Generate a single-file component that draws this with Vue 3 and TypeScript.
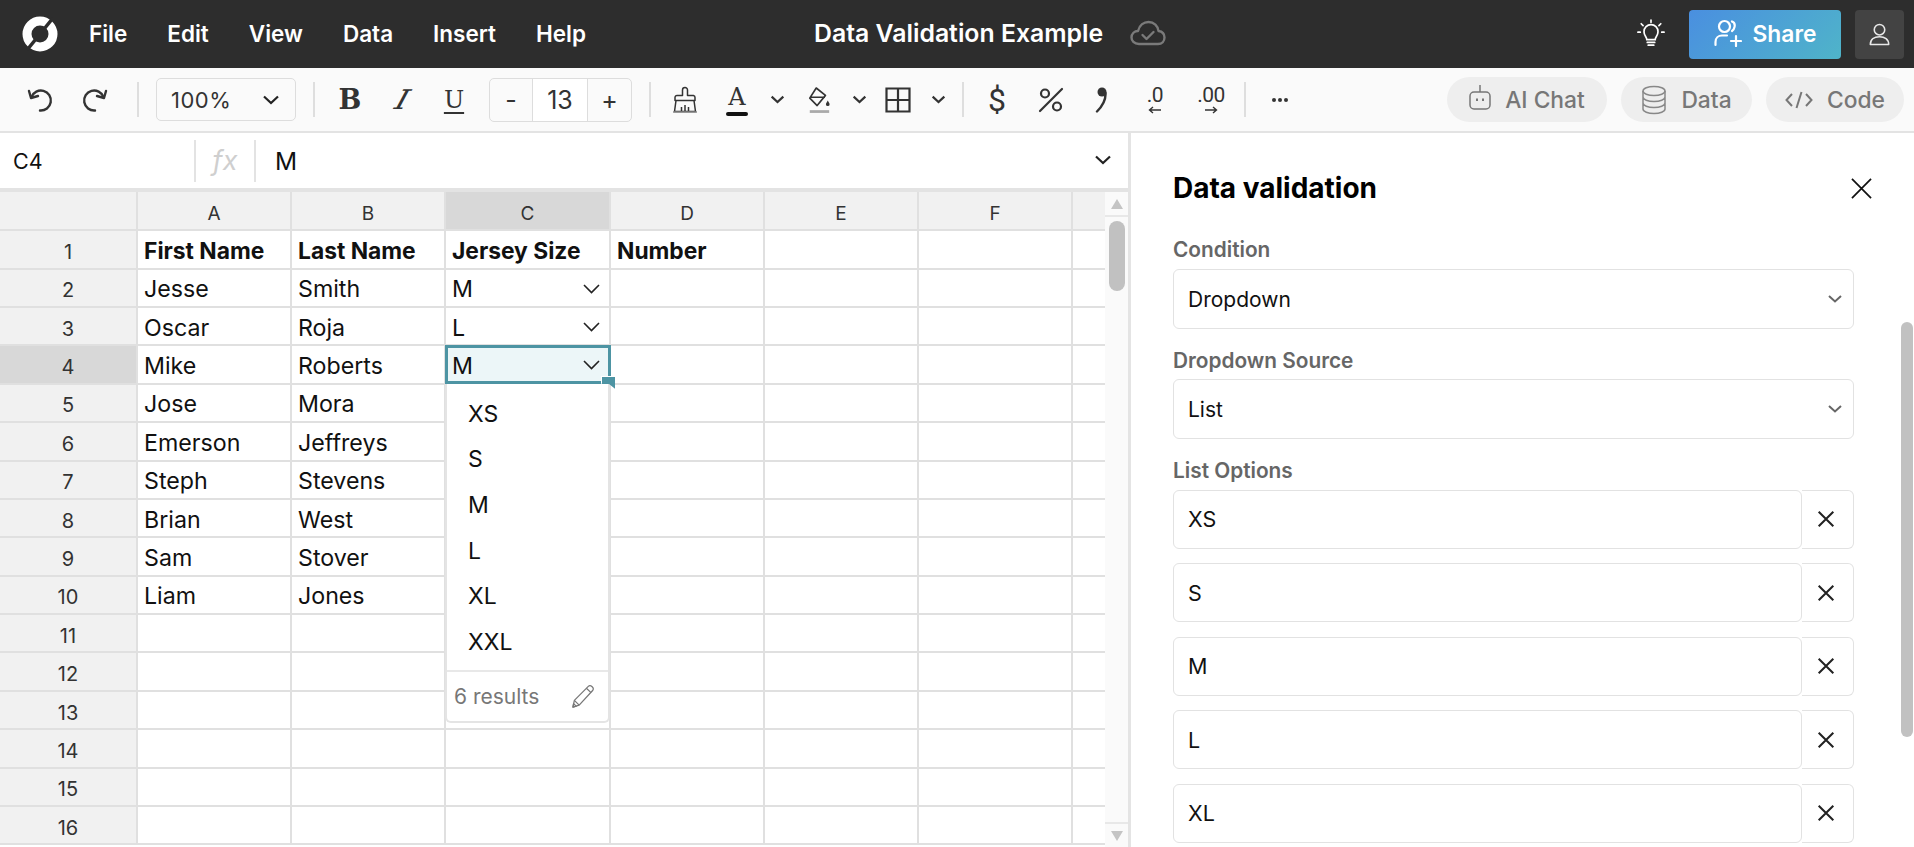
<template>
  <div class="app">
    <header class="topbar">
      <svg class="logo" viewBox="0 0 36 36">
        <circle cx="18" cy="18" r="13" fill="none" stroke="#fff" stroke-width="9" />
        <path d="M31 2 L5 34" stroke="#2d2d2d" stroke-width="3.5" />
      </svg>
      <nav class="menu">
        <span v-for="m in menus" :key="m">{{ m }}</span>
      </nav>
      <div class="doc-title">Data Validation Example</div>
      <svg class="cloud" viewBox="0 0 36 26" fill="none" stroke="#7a7a7a" stroke-width="2.4" stroke-linecap="round" stroke-linejoin="round">
        <path d="M9 24 C4 24 1.5 20.500 1.500 17.500 C1.500 13.500 4.500 11 8 11 C9.500 5 14 2 18.500 2 C24 2 28 6 28.500 11 C32 11.500 34.500 14 34.500 17.500 C34.500 21 32 24 28 24 Z" />
        <path d="M12.500 15 L16.500 19 L23.500 12" />
      </svg>
      <div class="top-right">
        <svg class="bulb" viewBox="0 0 30 32" fill="none" stroke="#fff" stroke-width="1.800" stroke-linecap="round">
          <path d="M10.500 22 C10.500 19 7.500 18 7.500 13.500 A7.500 7.500 0 0 1 22.500 13.500 C22.500 18 19.500 19 19.500 22 Z" />
          <path d="M11 25 H19 M12 28 H18 M15 1 V3.500 M4.500 5 L6.500 7 M25.500 5 L23.500 7 M1 14 H3.500 M26.500 14 H29" />
        </svg>
        <button class="share">
          <svg viewBox="0 0 28 28" fill="none" stroke="#fff" stroke-width="2.200" stroke-linecap="round">
            <circle cx="10.500" cy="7.500" r="5.500" />
            <path d="M1.500 26 V23 C1.500 19 4.500 16.500 8 16.500 H13 M18 2.500 C20.500 3.500 21 6 20.500 8 C20.200 9.500 19.500 11 18 12 M17 22 H27 M22 17 V27" />
          </svg>
          Share
        </button>
        <button class="avatar">
          <svg viewBox="0 0 24 26" fill="none" stroke="#e8e8e8" stroke-width="1.800">
            <circle cx="12" cy="7.500" r="6" />
            <path d="M1.500 24.500 C1.500 18.500 6 15.500 12 15.500 C18 15.500 22.500 18.500 22.500 24.500 Z" stroke-linejoin="round" />
          </svg>
        </button>
      </div>
    </header>

    <div class="toolbar">
      <button class="tb undo">
        <svg viewBox="0 0 28 28" fill="none" stroke="#333" stroke-width="2.400" stroke-linecap="round" stroke-linejoin="round">
          <path d="M5.500 11 A10 10 0 1 1 14 24.500" /><path d="M3 5 L5 12 L12 10" />
        </svg>
      </button>
      <button class="tb redo">
        <svg viewBox="0 0 28 28" fill="none" stroke="#333" stroke-width="2.400" stroke-linecap="round" stroke-linejoin="round">
          <path d="M22.500 11 A10 10 0 1 0 14 24.500" /><path d="M25 5 L23 12 L16 10" />
        </svg>
      </button>
      <i class="sep s1" />
      <div class="zoom-box">
        <span>100%</span>
        <svg class="chev-b" viewBox="0 0 18 10"><path d="M2 1.500 L9 8 L16 1.500" /></svg>
      </div>
      <i class="sep s2" />
      <button class="tb glyph bold">B</button>
      <button class="tb glyph ital"><span>I</span></button>
      <button class="tb glyph under">U</button>
      <div class="stepper">
        <span class="st-btn">-</span>
        <span class="st-val">13</span>
        <span class="st-btn">+</span>
      </div>
      <i class="sep s3" />
      <button class="tb brush">
        <svg viewBox="0 0 26 28" fill="none" stroke="#333" stroke-width="1.500" stroke-linejoin="round">
          <path d="M10.500 9.500 V4 A2.500 2.500 0 0 1 15.500 4 V9.500 H21.500 A2 2 0 0 1 23 11.500 V14.500 H3 V11.500 A2 2 0 0 1 5 9.500 Z" />
          <path d="M4 14.500 L2.500 25.500 H23.500 L22 14.500 M9.500 25 V21 M13 25 V19 M16.500 25 V21" />
          <path d="M1 26 H25" stroke="#888" />
        </svg>
      </button>
      <button class="tb glyph color-a">A</button>
      <button class="tb caret"><svg class="chev-b small" viewBox="0 0 18 10"><path d="M2 1.500 L9 8 L16 1.500" /></svg></button>
      <button class="tb fill">
        <svg viewBox="0 0 26 30" fill="none" stroke="#333" stroke-width="1.800" stroke-linejoin="round">
          <path d="M10 2 L20 10 L11 21 L3 13 Z M4 12 H19.500" />
          <path d="M22.500 15.500 C21.500 17.500 20.500 18.500 20.500 19.500 A2 2 0 0 0 24.500 19.500 C24.500 18.500 23.500 17.500 22.500 15.500 Z" fill="#333" stroke="none" />
          <path d="M3 27.500 H24" stroke="#aaa" stroke-width="3" />
        </svg>
      </button>
      <button class="tb caret"><svg class="chev-b small" viewBox="0 0 18 10"><path d="M2 1.500 L9 8 L16 1.500" /></svg></button>
      <button class="tb borders">
        <svg viewBox="0 0 26 26" fill="none" stroke="#333" stroke-width="2.200">
          <path d="M1.500 1.500 H24.500 V24.500 H1.500 Z M13 1.500 V24.500 M1.500 13 H24.500" />
        </svg>
      </button>
      <button class="tb caret"><svg class="chev-b small" viewBox="0 0 18 10"><path d="M2 1.500 L9 8 L16 1.500" /></svg></button>
      <i class="sep s4" />
      <button class="tb sym dollar">$</button>
      <button class="tb percent">
        <svg viewBox="0 0 26 26" fill="none" stroke="#333" stroke-width="2.200" stroke-linecap="round">
          <circle cx="7" cy="6.500" r="4" />
          <circle cx="19" cy="19.500" r="4" />
          <path d="M24 2 L2 24" />
        </svg>
      </button>
      <button class="tb comma">
        <svg viewBox="0 0 12 26" fill="#333">
          <circle cx="7" cy="5" r="4.500" />
          <path d="M10.500 6 C11 13 8 18.500 2 24.500" fill="none" stroke="#333" stroke-width="2.400" stroke-linecap="round" />
        </svg>
      </button>
      <button class="tb dec">
        <span>.0</span>
        <svg viewBox="0 0 14 8" fill="none" stroke="#333" stroke-width="1.400"><path d="M13 4 H1.500 M5 1 L1.500 4 L5 7" /></svg>
      </button>
      <button class="tb dec">
        <span>.00</span>
        <svg viewBox="0 0 14 8" fill="none" stroke="#333" stroke-width="1.400"><path d="M1 4 H12.500 M9 1 L12.500 4 L9 7" /></svg>
      </button>
      <i class="sep s5" />
      <button class="tb more">
        <svg viewBox="0 0 18 4" fill="#333"><circle cx="3" cy="2" r="2" /><circle cx="9" cy="2" r="2" /><circle cx="15" cy="2" r="2" /></svg>
      </button>
      <div class="pills">
        <button class="pill p-ai">
          <svg viewBox="0 0 22 26" fill="none" stroke="#777" stroke-width="1.500">
            <rect x="1" y="8" width="20" height="17" rx="4" />
            <path d="M11 1 V8" />
            <path d="M8 14.500 V17 M14 14.500 V17" stroke-width="2" />
          </svg>
          AI Chat
        </button>
        <button class="pill p-data">
          <svg viewBox="0 0 26 30" fill="none" stroke="#888" stroke-width="1.500">
            <ellipse cx="13" cy="6" rx="11" ry="4.500" />
            <path d="M2 6 V24 C2 26.500 7 28.500 13 28.500 C19 28.500 24 26.500 24 24 V6 M2 12 C2 14.500 7 16.500 13 16.500 C19 16.500 24 14.500 24 12 M2 18 C2 20.500 7 22.500 13 22.500 C19 22.500 24 20.500 24 18" />
          </svg>
          Data
        </button>
        <button class="pill p-code">
          <svg viewBox="0 0 28 18" fill="none" stroke="#777" stroke-width="2">
            <path d="M7 3 L1.500 9 L7 15 M21 3 L26.500 9 L21 15 M16.500 1 L11.500 17" />
          </svg>
          Code
        </button>
      </div>
    </div>

    <main class="body">
      <section class="sheet">
        <div class="formula">
          <div class="name-box">C4</div>
          <i class="fsep" />
          <span class="fx">fx</span>
          <i class="fsep" />
          <span class="fval">M</span>
          <svg class="chev-b fchev" viewBox="0 0 18 10"><path d="M2 1.500 L9 8 L16 1.500" /></svg>
        </div>
        <div class="grid-wrap">
          <div class="grid">
            <div class="hd corner" />
            <div
              v-for="(c, i) in columns"
              :key="'h' + i"
              class="hd"
              :class="{ active: c === 'C', last: i === columns.length - 1 }"
            >{{ c }}</div>
            <template v-for="(row, r) in rows" :key="r">
              <div class="rownum" :class="{ active: r === 3 }">{{ r + 1 }}</div>
              <div
                v-for="(val, c) in row"
                :key="c"
                class="cell"
                :class="{ strong: r === 0, last: c === 6 }"
              >
                <span>{{ val }}</span>
                <svg v-if="c === 2 && r > 0 && r < 4" class="cell-chev" viewBox="0 0 18 10"><path d="M1.500 1 L9 8.500 L16.500 1" /></svg>
                <template v-if="c === 2 && r === 3">
                  <div class="selection" />
                  <div class="handle" />
                  <div class="dropdown">
                    <div class="opts">
                      <div v-for="o in options" :key="o" class="opt">{{ o }}</div>
                    </div>
                    <div class="dd-foot">
                      <span>6 results</span>
                      <svg viewBox="0 0 26 26" fill="none" stroke="#777" stroke-width="1.300" stroke-linejoin="round">
                        <path d="M2 24 L3.500 17 L18 2.500 C19 1.500 20.500 1.500 22 2.800 C23.500 4.200 23.500 5.500 22.500 6.800 L8.500 22 Z" />
                        <path d="M16 4.500 L20.800 9 M3.500 17 L8.500 22 M2 24 L2.700 20.500 L5.500 23 Z" />
                      </svg>
                    </div>
                  </div>
                </template>
              </div>
            </template>
          </div>
          <div class="vscroll">
            <div class="arrow-box up"><i class="tri-up" /></div>
            <div class="thumb" />
            <div class="arrow-box down"><i class="tri-down" /></div>
          </div>
        </div>
      </section>

      <aside class="panel">
        <div class="panel-scroll" />
        <div class="panel-head">
          <h2>Data validation</h2>
          <svg viewBox="0 0 22 22" stroke="#111" stroke-width="1.800"><path d="M1 1 L21 21 M21 1 L1 21" /></svg>
        </div>
        <label class="lbl first">Condition</label>
        <div class="select">
          <span>Dropdown</span>
          <svg viewBox="0 0 14 8"><path d="M1 1 L7 6.500 L13 1" /></svg>
        </div>
        <label class="lbl second">Dropdown Source</label>
        <div class="select">
          <span>List</span>
          <svg viewBox="0 0 14 8"><path d="M1 1 L7 6.500 L13 1" /></svg>
        </div>
        <label class="lbl third">List Options</label>
        <div class="opt-list">
          <div v-for="o in panelOptions" :key="o" class="opt-row">
            <div class="opt-input">{{ o }}</div>
            <button class="opt-del">
              <svg viewBox="0 0 16 16" stroke="#222" stroke-width="1.800"><path d="M1.500 1.500 L14.500 14.500 M14.500 1.500 L1.500 14.500" /></svg>
            </button>
          </div>
        </div>
      </aside>
    </main>
  </div>
</template>

<script setup lang="ts">
const menus = ['File', 'Edit', 'View', 'Data', 'Insert', 'Help']
const columns = ['A', 'B', 'C', 'D', 'E', 'F', '']
const options = ['XS', 'S', 'M', 'L', 'XL', 'XXL']
const panelOptions = ['XS', 'S', 'M', 'L', 'XL']

const people: [string, string, string, string][] = [
  ['First Name', 'Last Name', 'Jersey Size', 'Number'],
  ['Jesse', 'Smith', 'M', ''],
  ['Oscar', 'Roja', 'L', ''],
  ['Mike', 'Roberts', 'M', ''],
  ['Jose', 'Mora', '', ''],
  ['Emerson', 'Jeffreys', '', ''],
  ['Steph', 'Stevens', '', ''],
  ['Brian', 'West', '', ''],
  ['Sam', 'Stover', '', ''],
  ['Liam', 'Jones', '', ''],
]

// 16 rows are visible, the ones past the data are empty
const rows: string[][] = Array.from({ length: 16 }, (_, i) => {
  const p = people[i]
  return p ? [...p, '', '', ''] : ['', '', '', '', '', '', '']
})
</script>

<style>
html, body {
  margin: 0;
  height: 100%;
  overflow: hidden;
  background: #fff;
}
</style>

<style scoped>
.app {
  width: 1914px;
  height: 847px;
  display: flex;
  flex-direction: column;
  overflow: hidden;
  font-family: Inter, "Noto Sans", sans-serif;
  color: #111;
}
button {
  font-family: inherit;
  border: none;
  background: none;
  padding: 0;
}

/* top bar */
.topbar {
  height: 68px;
  flex-shrink: 0;
  background: #2d2d2d;
  display: flex;
  align-items: center;
  color: #fff;
  padding-left: 22px;
}
.logo {
  width: 36px;
  height: 36px;
}
.menu {
  display: flex;
  gap: 40px;
  margin-left: 31px;
  padding-bottom: 2px;
  font-size: 22.500px;
  font-weight: 600;
}
.doc-title {
  margin-left: 228px;
  padding-bottom: 2px;
  font-size: 24.800px;
  font-weight: 600;
  white-space: nowrap;
}
.cloud {
  width: 36px;
  height: 26px;
  margin: 0 0 2px 27px;
}
.top-right {
  margin-left: auto;
  display: flex;
  align-items: center;
  padding-right: 10px;
}
.bulb {
  width: 28px;
  height: 30px;
  margin-right: 24px;
}
.share {
  width: 152px;
  height: 49px;
  padding-bottom: 2px;
  border-radius: 4px;
  background: linear-gradient(135deg, #4a8fe0, #4fb4c9);
  color: #fff;
  font-size: 22.800px;
  font-weight: 600;
  display: flex;
  align-items: center;
  justify-content: center;
  gap: 11px;
}
.share svg {
  width: 28px;
  height: 28px;
}
.avatar {
  width: 49px;
  height: 49px;
  margin-left: 14px;
  border-radius: 4px;
  background: #434343;
  display: flex;
  align-items: center;
  justify-content: center;
}
.avatar svg {
  width: 21px;
  height: 23px;
}

/* toolbar */
.toolbar {
  height: 63px;
  flex-shrink: 0;
  box-sizing: content-box;
  background: #fafafa;
  border-bottom: 2px solid #e3e3e3;
  display: flex;
  align-items: center;
  padding-left: 13px;
  color: #333;
}
.tb {
  width: 52px;
  height: 44px;
  flex-shrink: 0;
  display: flex;
  align-items: center;
  justify-content: center;
  color: #333;
}
.undo, .redo {
  width: 54.500px;
}
.undo svg, .redo svg {
  width: 28px;
  height: 28px;
}
.sep {
  width: 2px;
  height: 35px;
  flex-shrink: 0;
  background: #dedede;
}
.s1 { margin-left: 15px; }
.s2 { margin-left: 17px; }
.s3 { margin-left: 17px; }
.s4 { margin-left: 14px; }
.s5 { margin-left: 7px; }
.zoom-box {
  width: 140px;
  height: 43px;
  box-sizing: border-box;
  margin-left: 17px;
  border: 1px solid #ddd;
  border-radius: 5px;
  display: flex;
  align-items: center;
  justify-content: space-between;
  padding: 0 15px 0 14px;
  font-size: 22px;
  letter-spacing: 0.500px;
  color: #333;
}
.chev-b {
  width: 18px;
  height: 10px;
  fill: none;
  stroke: #222;
  stroke-width: 2.200;
}
.chev-b.small {
  width: 15px;
  height: 9px;
  stroke: #333;
  stroke-width: 2.600;
}
.glyph {
  font-family: "DejaVu Serif", serif;
  font-size: 27px;
}
.bold {
  margin-left: 9px;
  font-weight: 700;
}
.ital span {
  display: block;
  font-size: 27px;
  transform: skewX(-28deg) scaleX(1.2);
}
.under {
  text-decoration: underline;
  text-underline-offset: 4px;
  text-decoration-thickness: 2px;
  font-size: 24px;
}
.stepper {
  width: 143px;
  height: 44px;
  box-sizing: border-box;
  margin-left: 9px;
  border: 1px solid #ddd;
  border-radius: 5px;
  display: grid;
  grid-template-columns: 42px 56px 1fr;
  align-items: stretch;
  font-size: 25px;
  color: #333;
}
.stepper span {
  display: flex;
  align-items: center;
  justify-content: center;
}
.st-val {
  background: #fff;
  border-left: 1px solid #ddd;
  border-right: 1px solid #ddd;
}
.brush {
  margin-left: 8px;
}
.brush svg {
  width: 26px;
  height: 28px;
}
.color-a {
  position: relative;
  font-size: 24px;
  padding-bottom: 6px;
  box-sizing: border-box;
}
.color-a::after {
  content: "";
  position: absolute;
  left: 15px;
  right: 15px;
  bottom: 6px;
  height: 4px;
  border-radius: 2px;
  background: #111;
}
.caret {
  width: 24px;
  padding-left: 4px;
  box-sizing: border-box;
}
.fill {
  margin-left: 6px;
}
.fill svg {
  width: 24px;
  height: 28px;
}
.borders {
  margin-left: 3px;
}
.borders svg {
  width: 26px;
  height: 26px;
}
.sym {
  font-family: Roboto, sans-serif;
}
.dollar {
  margin-left: 7px;
  font-size: 32px;
}
.percent {
  margin-left: 2px;
}
.percent svg {
  width: 26px;
  height: 26px;
}
.comma {
  width: 48px;
}
.comma svg {
  width: 12px;
  height: 26px;
}
.dec {
  width: 52px;
  margin-left: 4px;
  flex-direction: column;
  font-family: Roboto, sans-serif;
  font-size: 21px;
  line-height: 20px;
  letter-spacing: -0.500px;
}
.dec svg {
  width: 14px;
  height: 8px;
  margin-top: 1px;
}
.more {
  margin-left: 8px;
}
.more svg {
  width: 18px;
  height: 4px;
}
.pills {
  margin-left: auto;
  padding-right: 10px;
  display: flex;
  gap: 14px;
}
.pill {
  height: 45px;
  border-radius: 23px;
  background: #eee;
  color: #777;
  font-size: 22.800px;
  font-weight: 500;
  display: flex;
  align-items: center;
  justify-content: center;
  gap: 14px;
}
.p-ai { width: 160px; }
.p-data { width: 131px; }
.p-code { width: 138px; }
.p-ai svg {
  width: 22px;
  height: 26px;
  margin-top: -5px;
}
.p-data svg {
  width: 26px;
  height: 30px;
}
.p-code svg {
  width: 28px;
  height: 18px;
}

/* sheet */
.body {
  flex: 1;
  display: flex;
  min-height: 0;
}
.sheet {
  width: 1128px;
  flex-shrink: 0;
  display: flex;
  flex-direction: column;
  min-height: 0;
}
.formula {
  height: 55px;
  flex-shrink: 0;
  border-bottom: 4px solid #e3e3e3;
  box-sizing: content-box;
  display: flex;
  align-items: center;
  font-size: 21.500px;
}
.name-box {
  width: 194px;
  flex-shrink: 0;
  box-sizing: border-box;
  padding-left: 13px;
}
.fsep {
  width: 2px;
  height: 42px;
  background: #e3e3e3;
  flex-shrink: 0;
}
.fx {
  width: 58px;
  text-align: center;
  font-style: italic;
  font-size: 27px;
  color: #cfcfcf;
}
.fval {
  margin-left: 19px;
  font-size: 24.500px;
}
.fchev {
  margin-left: auto;
  margin-right: 16px;
  margin-top: -2px;
}
.grid-wrap {
  flex: 1;
  display: flex;
  min-height: 0;
  overflow: hidden;
}
.grid {
  width: 1105px;
  flex-shrink: 0;
  display: grid;
  grid-template-columns: 138px 154px 154px 165px 154px 154px 154px 32px;
  grid-template-rows: 39.200px;
  grid-auto-rows: 38.400px;
  align-content: start;
}
.hd, .rownum, .cell {
  box-sizing: border-box;
  border-right: 2px solid #e0e0e0;
  border-bottom: 2px solid #e0e0e0;
}
.hd {
  background: #f1f1f1;
  display: flex;
  align-items: center;
  justify-content: center;
  font-size: 19px;
  color: #333;
  padding-top: 5px;
}
.hd.active, .rownum.active {
  background: #d8d8d8;
}
.hd.last, .cell.last {
  border-right: none;
}
.rownum {
  background: #f1f1f1;
  display: flex;
  align-items: center;
  justify-content: center;
  font-size: 20px;
  color: #333;
  padding-top: 5px;
}
.cell {
  position: relative;
  display: flex;
  align-items: center;
  padding: 3px 0 0 6px;
  font-size: 23.200px;
  white-space: nowrap;
  background: #fff;
}
.cell.strong {
  font-weight: 700;
  font-size: 22.800px;
}
.cell-chev {
  position: absolute;
  z-index: 3;
  right: 8px;
  top: 14px;
  width: 19px;
  height: 10px;
  fill: none;
  stroke: #222;
  stroke-width: 1.600;
}
.cell > span {
  position: relative;
  z-index: 3;
}
.selection {
  position: absolute;
  z-index: 2;
  left: -1px;
  top: -1px;
  right: -2px;
  bottom: -1px;
  border: 3px solid #4d94a3;
  background: #ecf6f8;
}
.handle {
  position: absolute;
  z-index: 5;
  right: -6px;
  bottom: -6px;
  width: 14px;
  height: 13px;
  box-sizing: border-box;
  border-left: 1.500px solid #fff;
  border-top: 1.500px solid #fff;
  background: #4d94a3;
  background-clip: padding-box;
  clip-path: polygon(0 0, 100% 0, 100% 100%, 55% 62%, 0 62%);
}
.dropdown {
  position: absolute;
  z-index: 4;
  left: -1px;
  top: 37.400px;
  width: 165px;
  height: 339px;
  box-sizing: border-box;
  background: #fff;
  border: 2px solid #e4e4e4;
  border-top: none;
  border-radius: 0 0 6px 6px;
  display: flex;
  flex-direction: column;
}
.opts {
  padding-top: 7px;
  flex: 1;
}
.opt {
  height: 45.700px;
  display: flex;
  align-items: center;
  padding-left: 21px;
  font-size: 23px;
  font-weight: 400;
}
.dd-foot {
  height: 49px;
  border-top: 2px solid #e8e8e8;
  display: flex;
  align-items: center;
  justify-content: space-between;
  padding: 0 12px 0 7px;
  color: #777;
  font-size: 21px;
}
.dd-foot svg {
  width: 25px;
  height: 25px;
}
.vscroll {
  width: 23px;
  flex-shrink: 0;
  background: #fafafa;
  display: flex;
  flex-direction: column;
}
.arrow-box {
  height: 23px;
  flex-shrink: 0;
  display: flex;
  align-items: center;
  justify-content: center;
}
.arrow-box.up {
  border-bottom: 2px solid #e8e8e8;
}
.arrow-box.down {
  margin-top: auto;
  border-top: 2px solid #e8e8e8;
}
.tri-up, .tri-down {
  width: 0;
  height: 0;
  border-left: 6px solid transparent;
  border-right: 6px solid transparent;
}
.tri-up { border-bottom: 10px solid #c4c4c4; }
.tri-down { border-top: 10px solid #c4c4c4; }
.thumb {
  width: 16px;
  height: 70px;
  margin: 4px 0 0 4px;
  border-radius: 8px;
  background: #c1c1c1;
}

/* side panel */
.panel {
  position: relative;
  flex: 1;
  min-width: 0;
  border-left: 3px solid #e4e4e4;
  padding: 39px 0 0 42px;
  overflow: hidden;
}
.panel-head {
  width: 699px;
  height: 32px;
  display: flex;
  align-items: center;
  justify-content: space-between;
}
.panel-head h2 {
  margin: 0;
  font-size: 28px;
  font-weight: 700;
  color: #000;
}
.panel-head svg {
  width: 21px;
  height: 21px;
}
.panel-scroll {
  position: absolute;
  right: 1px;
  top: 189px;
  width: 12px;
  height: 415px;
  border-radius: 6px;
  background: #c1c1c1;
}
.lbl {
  display: block;
  font-size: 20.800px;
  line-height: 24px;
  font-weight: 600;
  color: #666;
}
.lbl.first { margin: 34px 0 7px; }
.lbl.second { margin: 20px 0 6px; }
.lbl.third { margin: 20px 0 6.500px; }
.select {
  width: 681px;
  height: 60px;
  box-sizing: border-box;
  border: 1.500px solid #e2e2e2;
  border-radius: 6px;
  display: flex;
  align-items: center;
  justify-content: space-between;
  padding: 0 11px 0 14px;
  font-size: 21px;
}
.select svg {
  width: 14px;
  height: 8px;
  fill: none;
  stroke: #666;
  stroke-width: 2;
}
.opt-list {
  display: flex;
  flex-direction: column;
  gap: 14.500px;
}
.opt-row {
  width: 681px;
  height: 59px;
  flex-shrink: 0;
  display: flex;
}
.opt-input {
  flex: 1;
  box-sizing: border-box;
  border: 1.500px solid #e2e2e2;
  border-radius: 6px;
  display: flex;
  align-items: center;
  padding-left: 14px;
  font-size: 21.500px;
}
.opt-del {
  width: 52px;
  box-sizing: border-box;
  border: 1.500px solid #e2e2e2;
  border-left: none;
  border-radius: 0 6px 6px 0;
  display: flex;
  align-items: center;
  justify-content: center;
}
.opt-del svg {
  width: 18px;
  height: 18px;
  margin-right: 3px;
}
</style>
